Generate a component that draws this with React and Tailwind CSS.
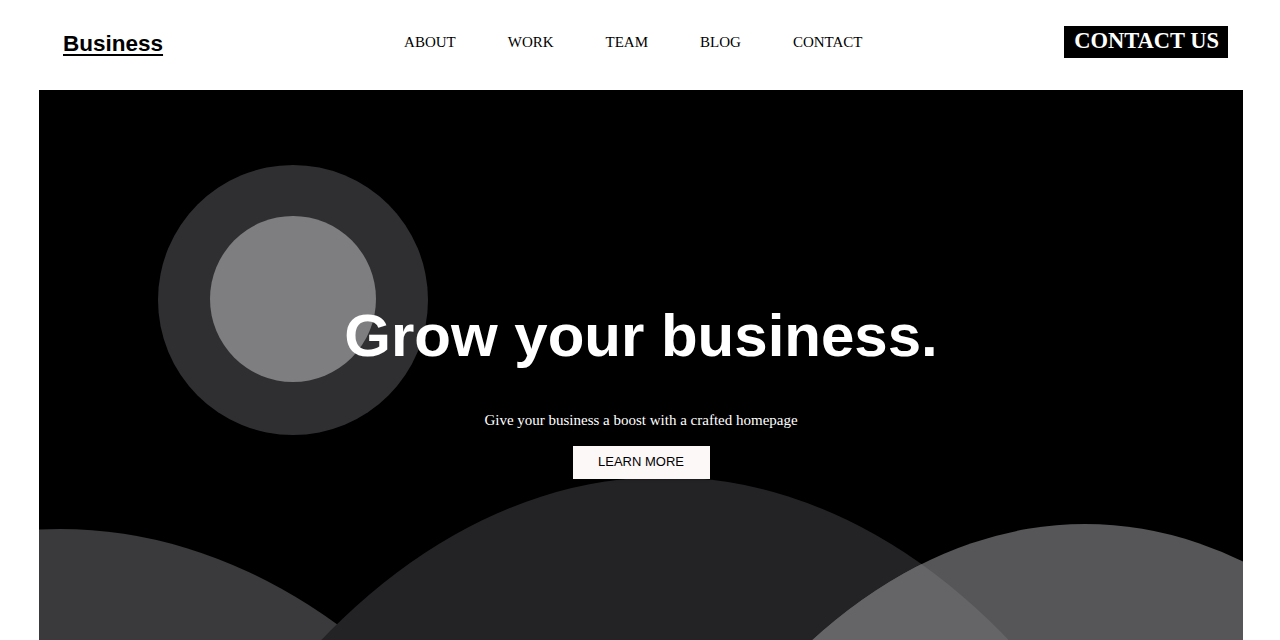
import React from 'react';

const links = ['ABOUT', 'WORK', 'TEAM', 'BLOG', 'CONTACT'];

function HeroArt() {
    return (
        <svg className="absolute inset-0" width="1204" height="600" viewBox="0 0 1204 600">
            <defs>
                <clipPath id="midHill">
                    <ellipse cx="626" cy="1387" rx="628" ry="1000" />
                </clipPath>
            </defs>
            <circle cx="254" cy="210" r="135" fill="#2f2e31" />
            <circle cx="254" cy="209" r="83" fill="#7e7d80" />
            <ellipse cx="21" cy="1439" rx="650" ry="1000" fill="#3a393b" />
            <ellipse cx="626" cy="1387" rx="628" ry="1000" fill="#232225" />
            <ellipse cx="1046" cy="1434" rx="583" ry="1000" fill="#565557" />
            <ellipse cx="1046" cy="1434" rx="583" ry="1000" fill="#656466" clipPath="url(#midHill)" />
        </svg>
    );
}

export default function App() {
    return (
        <div className="min-h-screen bg-white overflow-hidden">
            <header className="flex items-center h-[90px] pl-[63px] pr-[52px]">
                <a href="#" className="text-[22.5px] font-bold underline underline-offset-[3px] text-black font-['Liberation_Sans',Arial,sans-serif] mt-[-3px]">
                    Business
                </a>
                <nav className="flex items-center gap-[52px] ml-[241px] mt-[-6px] font-['Liberation_Serif','Times_New_Roman',serif] text-[15px] text-black">
                    {links.map(l => (
                        <a key={l} href="#">{l}</a>
                    ))}
                </nav>
                <a
                    href="#"
                    className="ml-auto bg-black text-white font-bold text-[22.5px] leading-none pl-[10px] pr-[9px] pt-[4px] pb-[6px] h-[32px] mt-[-6px] font-['Liberation_Serif','Times_New_Roman',serif]"
                >
                    CONTACT US
                </a>
            </header>

            <section className="relative ml-[39px] w-[1204px] h-[600px] bg-black overflow-hidden">
                <HeroArt />
                <div className="relative flex flex-col items-center pt-[216px]">
                    <h1 className="text-white font-bold text-[60px] leading-none font-['Liberation_Sans',Arial,sans-serif]">
                        Grow your business.
                    </h1>
                    <p className="mt-[43px] text-white text-[15px] font-['Liberation_Serif','Times_New_Roman',serif]">
                        Give your business a boost with a crafted homepage
                    </p>
                    <button className="mt-[14px] w-[137px] h-[33px] bg-[#fdf8f8] text-black text-[13px] font-['Liberation_Sans',Arial,sans-serif] shadow-sm">
                        LEARN MORE
                    </button>
                </div>
            </section>
        </div>
    );
}
